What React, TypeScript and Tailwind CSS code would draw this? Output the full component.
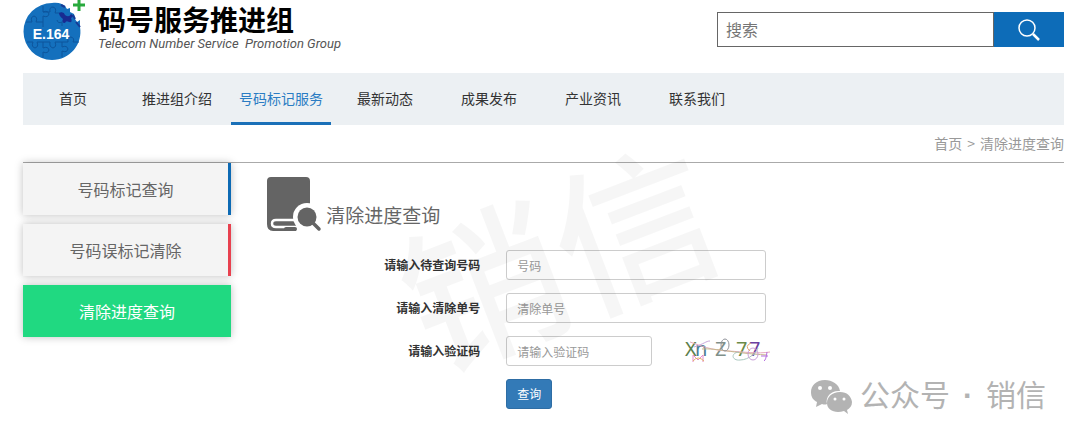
import React from 'react';
import clsx from 'clsx';

const navItems = ['首页', '推进组介绍', '号码标记服务', '最新动态', '成果发布', '产业资讯', '联系我们'];

const sideItems = [
  { label: '号码标记查询', style: 'border-r-[3px] border-[#0d6ab4] bg-[#f4f4f4] text-[#666]' },
  { label: '号码误标记清除', style: 'border-r-[3px] border-[#e8414f] bg-[#f4f4f4] text-[#666]' },
  { label: '清除进度查询', style: 'bg-[#20d981] text-white' },
];

export default function App() {
  return (
    <div className="relative overflow-hidden bg-white pr-4 pb-7 pl-[23px] font-['Noto_Sans_CJK_SC','Liberation_Sans',sans-serif] text-[#333]">
      <Header />
      <Nav />
      <Breadcrumb />
      <div className="flex border-t border-[#aaa]">
        <Sidebar />
        <main className="min-w-0 flex-1 pl-[35px]">
          <div className="flex items-center pt-[13px]">
            <BookSearchIcon />
            <h1 className="pt-5 pl-1 text-[19px] leading-8 text-[#666]">清除进度查询</h1>
          </div>
          <QueryForm />
        </main>
      </div>
      <Watermark />
      <AccountTag />
    </div>
  );
}

const Header = () => (
  <header className="flex h-[73px] justify-between">
    <a href="#home" className="flex">
      <Logo />
      <span className="block pl-[13px]">
        <span className="block text-[28px] leading-[38px] font-bold whitespace-nowrap text-black">码号服务推进组</span>
        <span className="block font-['Roboto','Liberation_Sans',sans-serif] text-[13px] leading-3 whitespace-pre text-[#555] italic">
          Telecom Number Service  Promotion Group
        </span>
      </span>
    </a>
    <form className="mt-3 flex h-[35px] w-1/3" onSubmit={(e) => e.preventDefault()}>
      <input
        type="text"
        aria-label="搜索"
        placeholder="搜索"
        className="min-w-0 flex-1 border border-[#666] bg-white px-2 pb-0.5 text-base outline-none placeholder:text-[#757575]"
      />
      <button type="submit" aria-label="搜索" className="flex w-[70px] items-center justify-center bg-[#0d6cb8]">
        <svg width="24" height="24" viewBox="0 0 24 24" fill="none" stroke="#fff">
          <circle cx="10" cy="10" r="8" strokeWidth="1.5" />
          <path d="M16 16L22 22" strokeWidth="2.5" />
        </svg>
      </button>
    </form>
  </header>
);

const Nav = () => (
  <nav className="flex h-[52px] gap-1 bg-[#ecf0f3]">
    {navItems.map((item, i) => (
      <a
        key={item}
        href="#nav"
        className={clsx(
          'w-[100px] border-b-[3px] text-center text-sm leading-[50px] whitespace-nowrap',
          i === 2 ? 'border-[#1a70b8] text-[#2a7cc3]' : 'border-transparent',
        )}
      >
        {item}
      </a>
    ))}
  </nav>
);

const Breadcrumb = () => (
  <div className="flex h-[37px] items-center justify-end gap-[5px] pb-0.5 text-sm text-[#999]">
    <a href="#home">首页</a>
    <span>&gt;</span>
    <a href="#progress">清除进度查询</a>
  </div>
);

const Sidebar = () => (
  <aside className="flex w-1/5 flex-col gap-[9px]">
    {sideItems.map((item) => (
      <a
        key={item.label}
        href="#service"
        className={clsx('block h-[52px] text-center text-base leading-[52px] shadow-[0_0_8px_rgba(0,0,0,0.25)]', item.style)}
      >
        {item.label}
      </a>
    ))}
  </aside>
);

const inputStyle =
  'h-[30px] rounded-[3px] border border-[#ccc] bg-white px-[10px] text-xs outline-none placeholder:text-[#999]';

const QueryForm = () => (
  <form className="mt-[17px] flex flex-col items-start gap-[13px]" onSubmit={(e) => e.preventDefault()}>
    <Field id="number" label="请输入待查询号码">
      <input id="number" type="text" placeholder="号码" className={clsx(inputStyle, 'w-[260px]')} />
    </Field>
    <Field id="order" label="请输入清除单号">
      <input id="order" type="text" placeholder="清除单号" className={clsx(inputStyle, 'w-[260px]')} />
    </Field>
    <Field id="captcha" label="请输入验证码">
      <input id="captcha" type="text" placeholder="请输入验证码" className={clsx(inputStyle, 'w-[146px]')} />
      <Captcha />
    </Field>
    <button type="submit" className="ml-[240px] h-[30px] rounded-[3px] border border-[#2e6da4] bg-[#337ab7] px-[10px] text-xs text-white">
      查询
    </button>
  </form>
);

const Field = ({ id, label, children }: any) => (
  <div className="flex items-center">
    <label htmlFor={id} className="mr-[26px] w-[214px] text-right text-xs font-bold">
      {label}
    </label>
    {children}
  </div>
);

const Captcha = () => (
  <svg width="92" height="30" viewBox="0 0 92 30" className="ml-[30px]" fill="none">
    <g fontFamily="Noto Sans" fontSize="20">
      <text x="3" y="20" fill="#5d7f4c">X</text>
      <text x="13" y="20" fill="#4a7c93">n</text>
      <text x="33" y="20" fill="#80908a">Z</text>
      <text x="54" y="20" fill="#6b8a48">7</text>
      <text x="67" y="20" fill="#6b3fa0">7</text>
    </g>
    <g strokeWidth="1">
      <path d="M8 6C20 10 28 14 46 15S75 18 88 16" stroke="#e6a9bd" />
      <path d="M12 11C22 8 24 5 28 5" stroke="#c9a6dc" />
      <path d="M20 13C34 12 50 17 85 19" stroke="#c7b98d" />
      <path d="M11 26V19L16 24L21 19V26" stroke="#e48ccb" />
      <path d="M11 25Q16 19 22 25" stroke="#e3ae6c" />
      <ellipse cx="43" cy="9" rx="4" ry="6" stroke="#8f9299" />
      <path d="M57 16C48 17 50 25 58 24C67 24 75 16 76 12" stroke="#a9c8be" />
      <ellipse cx="71" cy="18" rx="5" ry="6" stroke="#c8a0d8" />
      <path d="M69 7Q62 10 68 15" stroke="#e4a56e" />
      <path d="M79 20H86M85 16Q84 24 82 25" stroke="#b56ce0" />
    </g>
  </svg>
);

const Logo = () => (
  <svg width="62" height="61" viewBox="0 0 62 61">
    <path
      d="M29 3C36 2 39 4 42 6L44 9L47 8L47 12L51 14L52 19L54 22L57 20L57 27C60 44 47 60 29 60A28.500 28.500 0 0 1 29 3Z"
      fill="#1470bd"
    />
    <g fill="none" stroke="#0d559c" strokeWidth="1">
      <path d="M3 22H9Q7 17 11 16Q15 17 13 22H20V16Q25 18 26 14Q25 10 20 12V6" />
      <path d="M20 22V27M20 12H27Q26 7 30 7Q34 8 32 13H39" />
      <path d="M4 42H10Q8 47 12 48Q16 47 14 42H20V48Q25 46 26 50Q25 54 20 52V58" />
      <path d="M20 42H27Q26 47 30 48Q34 47 32 42H39V47Q44 45 45 49Q44 53 39 51V57" />
      <path d="M39 42H45Q44 37 48 37Q52 38 50 42H56M39 26V22Q35 24 34 20" />
    </g>
    <path d="M36 13Q41 11 42 15Q46 18 48 14Q52 16 48 18Q50 23 46 22Q43 20 42 23Q38 23 40 19Q36 16 36 13Z" fill="#182b91" />
    <path d="M38 5L42 7M50 15L52 19M53 22L57 27" stroke="#173c96" strokeWidth="2" />
    <path d="M56 0V11M50 5H62" stroke="#28a93d" strokeWidth="3" />
    <text x="28" y="39" textAnchor="middle" fontFamily="Liberation Sans" fontSize="14" fontWeight="700" fill="#fff">
      E.164
    </text>
  </svg>
);

const BookSearchIcon = () => (
  <svg width="56" height="57" viewBox="0 0 56 57">
    <path d="M5 1H40Q44 1 44 5V45H30V55H7Q1 55 1 48V5Q1 1 5 1Z" fill="#646464" />
    <path d="M31 44H10Q6 44 6 47.500T10 51H31" fill="none" stroke="#fff" strokeWidth="2.500" />
    <path d="M9 47.500H30" stroke="#646464" strokeWidth="2" />
    <circle cx="41" cy="41" r="14" fill="#fff" />
    <path d="M30 44L32 57H45V44Z" fill="#fff" />
    <path d="M20 53H29" stroke="#646464" strokeWidth="4" strokeLinecap="round" />
    <circle cx="41" cy="41" r="9.500" fill="#646464" />
    <path d="M46 46L53 53" stroke="#646464" strokeWidth="3.500" strokeLinecap="round" />
  </svg>
);

const Watermark = () => (
  <div className="pointer-events-none absolute top-[138px] left-[396px] rotate-[-21deg] text-[160px] leading-[224px] font-medium whitespace-nowrap text-black/[0.035]">
    销信
  </div>
);

const AccountTag = () => (
  <div className="pointer-events-none absolute top-[374px] right-[34px] flex items-end text-[30px] leading-[38px] text-[#b3b3b3]">
    <svg width="42" height="36" viewBox="0 0 42 36" className="mr-2">
      <path d="M15 1C6 1 1 7 1 13C1 18 3 21 7 23L6 28L12 25Q15 26 17 25C15 17 22 11 30 12C29 5 22 1 15 1Z" fill="#b3b3b3" />
      <path d="M30 13C22 13 17 18 17 24C17 31 25 35 34 32L38 35L37 31C40 29 42 27 42 23C41 17 37 13 30 13Z" fill="#b3b3b3" />
      <g fill="#fff">
        <circle cx="10" cy="9" r="2" />
        <circle cx="20" cy="9" r="2" />
        <circle cx="25" cy="20" r="1.500" />
        <circle cx="34" cy="20" r="1.500" />
      </g>
    </svg>
    <p className="whitespace-nowrap">
      公众号<span className="px-[13px] font-['Liberation_Sans'] font-bold">·</span>销信
    </p>
  </div>
);
